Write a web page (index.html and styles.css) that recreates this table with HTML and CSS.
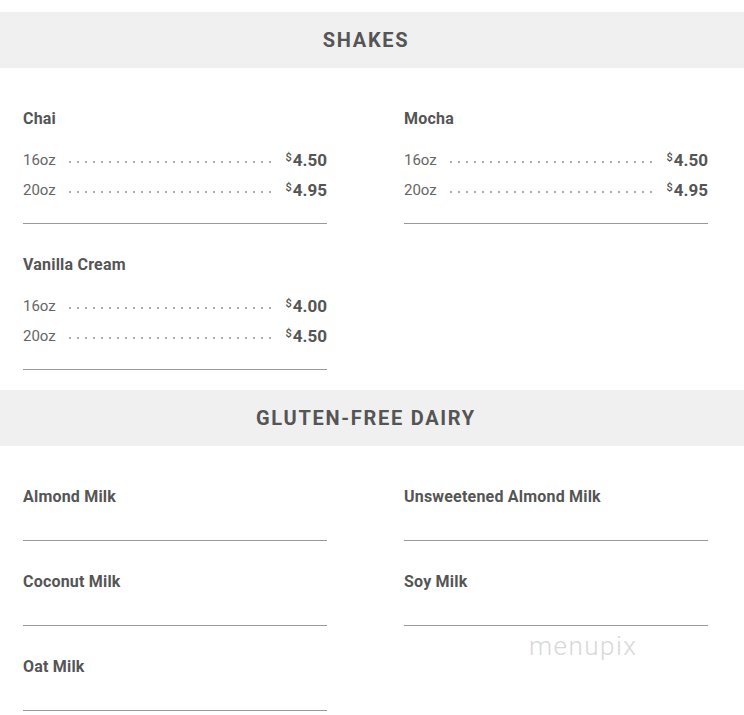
FILE: index.html
```
<!DOCTYPE html>
<html>
<head>
<meta charset="utf-8">
<link rel="stylesheet" href="styles.css">
</head>
<body>
<div class="page">
  <div class="section-header">SHAKES</div>
  <div class="grid">
    <div class="item">
      <div class="name">Chai</div>
      <div class="sizes">
        <div class="row"><span class="size">16oz</span><span class="leader"></span><span class="price"><sup>$</sup>4.50</span></div>
        <div class="row"><span class="size">20oz</span><span class="leader"></span><span class="price"><sup>$</sup>4.95</span></div>
      </div>
    </div>
    <div class="item">
      <div class="name">Mocha</div>
      <div class="sizes">
        <div class="row"><span class="size">16oz</span><span class="leader"></span><span class="price"><sup>$</sup>4.50</span></div>
        <div class="row"><span class="size">20oz</span><span class="leader"></span><span class="price"><sup>$</sup>4.95</span></div>
      </div>
    </div>
    <div class="item">
      <div class="name">Vanilla Cream</div>
      <div class="sizes">
        <div class="row"><span class="size">16oz</span><span class="leader"></span><span class="price"><sup>$</sup>4.00</span></div>
        <div class="row"><span class="size">20oz</span><span class="leader"></span><span class="price"><sup>$</sup>4.50</span></div>
      </div>
    </div>
  </div>
  <div class="section-header">GLUTEN-FREE DAIRY</div>
  <div class="grid">
    <div class="item plain"><div class="name">Almond Milk</div></div>
    <div class="item plain"><div class="name">Unsweetened Almond Milk</div></div>
    <div class="item plain"><div class="name">Coconut Milk</div></div>
    <div class="item plain"><div class="name">Soy Milk</div></div>
    <div class="item plain"><div class="name">Oat Milk</div></div>
  </div>
  <div class="watermark">menupix</div>
</div>
</body>
</html>
```
FILE: styles.css
```
html, body {
  margin: 0;
  padding: 0;
  background: #fff;
}
body {
  font-family: Roboto, "Liberation Sans", sans-serif;
  color: #555;
}
.page {
  position: relative;
  width: 744px;
  padding-top: 12px;
}
.section-header {
  height: 56px;
  padding-right: 12px;
  background: #f0f0f0;
  display: flex;
  align-items: center;
  justify-content: center;
  font-size: 20px;
  font-weight: 700;
  letter-spacing: 1.7px;
  color: #555;
}
.grid {
  display: grid;
  grid-template-columns: 304px 304px;
  column-gap: 77px;
  row-gap: 31px;
  padding: 41px 23px 20px;
}
.item {
  border-bottom: 1px solid #9a9a9a;
  padding-bottom: 18px;
}
.item.plain {
  padding-bottom: 33px;
}
.name {
  font-size: 16px;
  font-weight: 700;
  letter-spacing: 0.2px;
  line-height: 20px;
  color: #555;
}
.sizes {
  margin-top: 16px;
}
.row {
  display: flex;
  align-items: center;
  height: 30px;
}
.size {
  font-size: 15px;
  color: #666;
}
.leader {
  flex: 1;
  height: 4px;
  margin: 4px 14px 0 10px;
  background-image: radial-gradient(circle, #aaa 0.7px, transparent 1.1px);
  background-size: 8px 4px;
  background-repeat: repeat-x;
  background-position: 0 0;
}
.price {
  font-size: 17px;
  font-weight: 700;
  color: #555;
}
.price sup {
  font-size: 11px;
  font-weight: 500;
  vertical-align: 5px;
  line-height: 0;
  margin-right: 1px;
}
.watermark {
  position: absolute;
  left: 529px;
  top: 631px;
  font-size: 26px;
  font-weight: 300;
  letter-spacing: 1.5px;
  color: #d8d8d8;
}
```
